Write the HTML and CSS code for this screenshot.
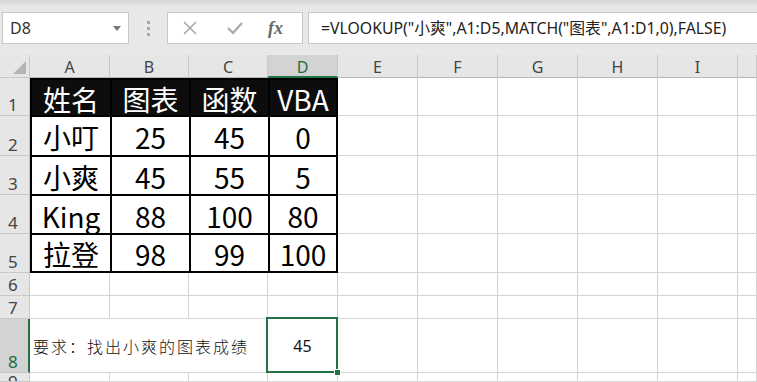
FILE: index.html
```html
<!DOCTYPE html>
<html lang="zh-CN">
<head>
  <meta charset="UTF-8" />
  <title>VLOOKUP + MATCH</title>
  <link rel="stylesheet" href="styles.css">
</head>
<body>
  <div class="toolbar">
    <div class="name-box">D8<span class="caret"></span></div>
    <div class="grip"><i></i><i></i><i></i></div>
    <div class="fx-box">
      <svg class="tool" width="16" height="16" viewBox="0 0 16 16">
        <path d="M2 2 L14 14 M14 2 L2 14" stroke="#a8a8a8" stroke-width="1.6" fill="none"/>
      </svg>
      <svg class="tool" width="18" height="16" viewBox="0 0 18 16">
        <path d="M2 8 L7 13 L16 3" stroke="#a8a8a8" stroke-width="2.2" fill="none"/>
      </svg>
      <span class="fx">fx</span>
    </div>
    <div class="formula">=VLOOKUP("小爽",A1:D5,MATCH("图表",A1:D1,0),FALSE)</div>
  </div>

  <div class="sheet">
    <!-- table block A1:D5 -->
    <div class="data">
      <div class="head">姓名</div>
      <div class="head">图表</div>
      <div class="head">函数</div>
      <div class="head">VBA</div>

      <div class="val">小叮</div><div class="val">25</div><div class="val">45</div><div class="val">0</div>
      <div class="val">小爽</div><div class="val">45</div><div class="val">55</div><div class="val">5</div>
      <div class="val">King</div><div class="val">88</div><div class="val">100</div><div class="val">80</div>
      <div class="val">拉登</div><div class="val">98</div><div class="val">99</div><div class="val">100</div>
    </div>

    <!-- column headers -->
    <div class="corner"><span class="tri"></span></div>
    <div class="col">A</div>
    <div class="col">B</div>
    <div class="col">C</div>
    <div class="col active">D</div>
    <div class="col">E</div>
    <div class="col">F</div>
    <div class="col">G</div>
    <div class="col">H</div>
    <div class="col">I</div>
    <div class="col"></div>

    <!-- rows 1-5 (A-D covered by the table) -->
    <div class="row">1</div>
    <div class="c"></div><div class="c"></div><div class="c"></div><div class="c"></div><div class="c"></div><div class="c"></div>
    <div class="row">2</div>
    <div class="c"></div><div class="c"></div><div class="c"></div><div class="c"></div><div class="c"></div><div class="c"></div>
    <div class="row">3</div>
    <div class="c"></div><div class="c"></div><div class="c"></div><div class="c"></div><div class="c"></div><div class="c"></div>
    <div class="row">4</div>
    <div class="c"></div><div class="c"></div><div class="c"></div><div class="c"></div><div class="c"></div><div class="c"></div>
    <div class="row">5</div>
    <div class="c"></div><div class="c"></div><div class="c"></div><div class="c"></div><div class="c"></div><div class="c"></div>

    <div class="row">6</div>
    <div class="c"></div><div class="c"></div><div class="c"></div><div class="c"></div><div class="c"></div>
    <div class="c"></div><div class="c"></div><div class="c"></div><div class="c"></div><div class="c"></div>
    <div class="row">7</div>
    <div class="c"></div><div class="c"></div><div class="c"></div><div class="c"></div><div class="c"></div>
    <div class="c"></div><div class="c"></div><div class="c"></div><div class="c"></div><div class="c"></div>

    <div class="row active">8</div>
    <div class="c note">要求：找出小爽的图表成绩</div>
    <div class="c result">45<span class="sel"><span class="handle"></span></span></div>
    <div class="c"></div><div class="c"></div><div class="c"></div><div class="c"></div><div class="c"></div><div class="c"></div>

    <div class="row last">9</div>
    <div class="c"></div><div class="c"></div><div class="c"></div><div class="c"></div><div class="c"></div>
    <div class="c"></div><div class="c"></div><div class="c"></div><div class="c"></div><div class="c"></div>
  </div>
</body>
</html>
```

FILE: styles.css
```css
* {
  box-sizing: border-box;
}

body {
  margin: 0;
  width: 757px;
  height: 382px;
  overflow: hidden;
  background: #fff;
  font-family: 'Noto Sans', 'Noto Sans CJK SC', sans-serif;
  color: #222;
}

/* formula bar */
.toolbar {
  height: 55px;
  display: flex;
  align-items: flex-start;
  padding-top: 12px;
  background: linear-gradient(#d6d6d6, #e8e8e8 7px, #e8e8e8);
  white-space: nowrap;
}

.name-box {
  position: relative;
  margin-left: 2px;
  width: 127px;
  height: 32px;
  background: #fff;
  border: 1px solid #c6c6c6;
  padding-left: 7px;
  font-size: 16px;
  line-height: 30px;
  color: #333;
}

.caret {
  position: absolute;
  right: 7px;
  top: 13px;
  border-left: 4px solid transparent;
  border-right: 4px solid transparent;
  border-top: 5px solid #777;
}

.grip {
  width: 38px;
  display: flex;
  flex-direction: column;
  align-items: center;
  gap: 3px;
  padding-top: 9px;
}

.grip i {
  width: 3px;
  height: 3px;
  background: #a8a8a8;
}

.fx-box {
  width: 136px;
  height: 32px;
  background: #fff;
  border: 1px solid #c6c6c6;
  display: flex;
  align-items: center;
  padding-left: 14px;
  gap: 28px;
}

.fx {
  font-family: 'Liberation Serif', serif;
  font-style: italic;
  font-weight: bold;
  font-size: 18px;
  color: #666;
  margin-left: -4px;
}

.formula {
  margin-left: 5px;
  flex: 1;
  height: 32px;
  background: #fff;
  border: 1px solid #c6c6c6;
  border-right: none;
  padding-left: 12px;
  font-size: 15.8px;
  line-height: 30px;
  color: #222;
}

/* grid */
.sheet {
  display: grid;
  grid-template-columns: 30px 80px 79px 79px 70px 80px 80px 80px 80px 80px 1fr;
  grid-template-rows: 23px 38px 40px 39px 39px 39px 23px 23px 54px 1fr;
  height: 327px;
}

.corner {
  position: relative;
  background: #e6e6e6;
  border-right: 1px solid #c8c8c8;
  border-bottom: 1px solid #c8c8c8;
}

.tri {
  position: absolute;
  right: 3px;
  bottom: 3px;
  border-left: 13px solid transparent;
  border-bottom: 13px solid #b4b4b4;
}

.col {
  background: #e6e6e6;
  border-right: 1px solid #c8c8c8;
  border-bottom: 1px solid #b8b8b8;
  text-align: center;
  font-size: 16px;
  line-height: 24px;
  color: #444;
}

.col.active {
  background: #d3d3d3;
  color: #1e6b40;
  border-bottom: 2px solid #217346;
}

.row {
  background: #e6e6e6;
  border-right: 1px solid #c8c8c8;
  border-bottom: 1px solid #c8c8c8;
  display: flex;
  align-items: flex-end;
  padding-left: 8px;
  font-size: 17px;
  line-height: 20px;
  color: #444;
}

.row.active {
  background: #d3d3d3;
  color: #1e6b40;
  border-right: 2px solid #217346;
}

.row.last {
  align-items: flex-start;
  line-height: 16px;
  padding-top: 1px;
  overflow: hidden;
}

.c {
  border-right: 1px solid #d4d4d4;
  border-bottom: 1px solid #d4d4d4;
}

/* A1:D5 with thick borders */
.data {
  grid-column: 2 / 6;
  grid-row: 2 / 7;
  display: grid;
  grid-template-columns: 78px 77px 77px 1fr;
  grid-template-rows: 35px 38px 37px 37px 1fr;
  gap: 2px;
  background: #000;
  border: 2px solid #000;
  font-family: 'Noto Sans CJK SC', 'Noto Sans', sans-serif;
  font-size: 28px;
}

.head, .val {
  display: flex;
  align-items: center;
  justify-content: center;
  line-height: 1;
  padding-top: 2px;
}

.head {
  background: #0d0d0d;
  color: #fff;
}

.val {
  background: #fff;
  color: #000;
}

.note {
  grid-column: span 3;
  display: flex;
  align-items: center;
  padding-left: 3px;
  font-family: 'Noto Sans CJK SC', sans-serif;
  font-size: 16px;
  font-weight: 300;
  letter-spacing: 2px;
  color: #111;
}

.result {
  position: relative;
  display: flex;
  align-items: center;
  justify-content: center;
  font-size: 16px;
  color: #111;
}

.sel {
  position: absolute;
  left: -2px;
  top: -2px;
  right: -1px;
  bottom: -1px;
  border: 2px solid #217346;
}

.handle {
  position: absolute;
  right: -5px;
  bottom: -5px;
  width: 7px;
  height: 7px;
  background: #217346;
  border: 1px solid #fff;
}
```
